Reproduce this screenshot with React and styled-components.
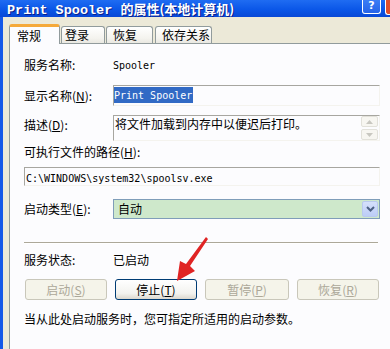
import styled, { createGlobalStyle } from "styled-components";

const Global = createGlobalStyle`
  html, body { margin: 0; padding: 0; background: #ece9d8; }
  body {
    width: 390px;
    height: 349px;
    overflow: hidden;
    font-family: "Noto Sans CJK SC", "Noto Sans", sans-serif;
    font-size: 12px;
    color: #000;
  }
`;

const Window = styled.div`
  position: relative;
  width: 390px;
  height: 349px;
  display: flex;
  flex-direction: column;
  overflow: hidden;
`;

const TitleBar = styled.div`
  height: 17px;
  flex-shrink: 0;
  display: flex;
  align-items: flex-start;
  background: linear-gradient(180deg, #1f6cf2 0%, #0b57e8 55%, #0848d6 100%);
  overflow: hidden;
`;

const Title = styled.div`
  padding: 1px 0 0 7px;
  color: #fff;
  font-weight: bold;
  font-size: 13px;
  line-height: 15px;
  white-space: nowrap;
  text-shadow: 1px 1px 0 #0a1f8c;
`;

const TitleLatin = styled.span`
  font-family: "Liberation Mono", monospace;
  font-size: 13.5px;
  font-weight: bold;
`;

const Controls = styled.div`
  margin-left: auto;
  display: flex;
  gap: 4px;
`;

const HelpButton = styled.div`
  width: 17px;
  height: 13px;
  border: 1px solid #fff;
  border-top: none;
  border-radius: 0 0 3px 3px;
  background: linear-gradient(180deg, #3b7df5 0%, #2563e8 100%);
  color: #fff;
  font-family: "DejaVu Sans", sans-serif;
  font-weight: bold;
  font-size: 11px;
  line-height: 11px;
  text-align: center;
`;

const CloseButton = styled.div`
  width: 4px;
  height: 14px;
  border-left: 1px solid #fff;
  border-bottom: 1px solid #fff;
  border-radius: 0 0 0 3px;
  background: #e0502e;
`;

const Frame = styled.div`
  flex: 1;
  display: flex;
  flex-direction: column;
  border-left: 3px solid #1458e8;
  box-shadow: inset 0 0 0 0 transparent;
  padding-left: 6px;
  background: #ece9d8;
`;

const TabRow = styled.div`
  height: 26px;
  flex-shrink: 0;
  display: flex;
  align-items: flex-end;
  gap: 1px;
  position: relative;
  z-index: 1;
`;

const Tab = styled.div`
  width: ${(p) => p.$w}px;
  height: ${(p) => (p.$active ? 20 : 17)}px;
  margin-left: ${(p) => p.$ml || 0}px;
  margin-bottom: ${(p) => (p.$active ? -1 : 0)}px;
  box-sizing: border-box;
  padding-left: ${(p) => p.$pl}px;
  display: flex;
  align-items: center;
  line-height: 14px;
  border: 1px solid #919b9c;
  border-bottom: none;
  border-radius: 3px 3px 0 0;
  background: ${(p) =>
    p.$active ? "#fcfcfe" : "linear-gradient(180deg, #ffffff 0%, #f4f3ee 70%, #e9e8e1 100%)"};
  border-top: ${(p) => (p.$active ? "3px solid #f5a93a" : "1px solid #919b9c")};
`;

const Panel = styled.div`
  flex: 1;
  display: flex;
  flex-direction: column;
  border-top: 1px solid #919b9c;
  border-left: 1px solid #919b9c;
  background: #fcfcfe;
  padding: 0 10px 0 14px;
`;

const Row = styled.div`
  display: flex;
  align-items: ${(p) => (p.$top ? "flex-start" : "center")};
  height: ${(p) => p.$h}px;
  margin-top: ${(p) => p.$mt}px;
  flex-shrink: 0;
`;

const Label = styled.div`
  width: 89px;
  flex-shrink: 0;
  line-height: 14px;
  white-space: nowrap;
  padding-top: ${(p) => p.$pt || 0}px;
`;

const Text = styled.div`
  line-height: 14px;
  white-space: nowrap;
  color: ${(p) => (p.$muted ? "#aca899" : "#000")};
`;

const Mono = styled.span`
  font-family: "DejaVu Sans Mono", monospace;
  font-size: 10px;
  letter-spacing: 0;
`;

const Field = styled.div`
  position: relative;
  flex: 1;
  height: 100%;
  box-sizing: border-box;
  border-top: 1px solid #a7a6a0;
  border-left: 1px solid #a7a6a0;
  border-right: 1px solid #f4f3ee;
  border-bottom: 1px solid #f4f3ee;
  padding: ${(p) => p.$pad || "1px 0 0 1px"};
  line-height: 14px;
  white-space: nowrap;
`;

const Selected = styled.span`
  display: inline-block;
  background: #316ac5;
  color: #fff;
  line-height: 14px;
  padding: 0 1px 0 0;
`;

const ScrollBtns = styled.div`
  position: absolute;
  right: 1px;
  top: 0;
  display: flex;
  flex-direction: column;
  gap: 2px;
`;

const ScrollBtn = styled.div`
  width: 15px;
  height: 9px;
  border: 1px solid #e2e1da;
  border-radius: 2px;
  background: #f7f6f1;
  display: flex;
  align-items: center;
  justify-content: center;
`;

const Select = styled.div`
  flex: 1;
  height: 100%;
  box-sizing: border-box;
  border: 1px solid #7f9db9;
  background: #cee8cb;
  display: flex;
  align-items: center;
  padding: 1px;
`;

const SelectText = styled.div`
  flex: 1;
  padding-left: 3px;
  line-height: 14px;
`;

const DropButton = styled.div`
  width: 16px;
  height: 100%;
  box-sizing: border-box;
  border: 1px solid #b9c9ef;
  border-radius: 2px;
  background: linear-gradient(180deg, #d5e0fb 0%, #bccdf6 100%);
  display: flex;
  align-items: center;
  justify-content: center;
`;

const Separator = styled.div`
  height: 1px;
  margin-top: ${(p) => p.$mt}px;
  margin-right: 2px;
  background: #aca899;
  border-bottom: 1px solid #ffffff;
  flex-shrink: 0;
`;

const ButtonRow = styled.div`
  display: flex;
  gap: 8px;
  height: 21px;
  margin-top: ${(p) => p.$mt}px;
  margin-left: 1px;
  flex-shrink: 0;
`;

const Button = styled.div`
  width: ${(p) => p.$w}px;
  height: 21px;
  box-sizing: border-box;
  border: 1px solid ${(p) => (p.$disabled ? "#c9c7ba" : "#003c74")};
  border-radius: 3px;
  background: ${(p) =>
    p.$disabled ? "#f5f4ea" : "linear-gradient(180deg, #ffffff 0%, #f3f3ef 70%, #dcd8ce 100%)"};
  color: ${(p) => (p.$disabled ? "#aca899" : "#000")};
  display: flex;
  align-items: center;
  justify-content: center;
  line-height: 14px;
`;

const Arrow = styled.svg`
  position: absolute;
  left: 0;
  top: 0;
  pointer-events: none;
`;

const Key = ({ k }) => (
  <>
    (<u>{k}</u>)
  </>
);

export default function App() {
  return (
    <>
      <Global />
      <Window>
        <TitleBar>
          <Title>
            <TitleLatin>Print Spooler </TitleLatin>的属性(本地计算机)
          </Title>
          <Controls>
            <HelpButton>?</HelpButton>
            <CloseButton />
          </Controls>
        </TitleBar>
        <Frame>
          <TabRow>
            <Tab $active $w={51} $pl={7}>常规</Tab>
            <Tab $w={44} $pl={3}>登录</Tab>
            <Tab $w={47} $pl={6}>恢复</Tab>
            <Tab $w={57} $pl={6} $ml={1}>依存关系</Tab>
          </TabRow>
          <Panel>
            <Row $h={18} $mt={12}>
              <Label>服务名称:</Label>
              <Text><Mono>Spooler</Mono></Text>
            </Row>
            <Row $h={21} $mt={11}>
              <Label>显示名称<Key k="N" />:</Label>
              <Field $pad="1px 0 0 0">
                <Selected><Mono>Print Spooler</Mono></Selected>
              </Field>
            </Row>
            <Row $h={26} $mt={9} $top>
              <Label $pt={3}>描述<Key k="D" />:</Label>
              <Field $pad="1px 0 0 1px">
                将文件加载到内存中以便迟后打印。
                <ScrollBtns>
                  <ScrollBtn>
                    <svg width="7" height="4" viewBox="0 0 7 4">
                      <path d="M0 4 L3.5 0 L7 4 Z" fill="#c8c7c0" />
                    </svg>
                  </ScrollBtn>
                  <ScrollBtn>
                    <svg width="7" height="4" viewBox="0 0 7 4">
                      <path d="M0 0 L3.5 4 L7 0 Z" fill="#c8c7c0" />
                    </svg>
                  </ScrollBtn>
                </ScrollBtns>
              </Field>
            </Row>
            <Row $h={12} $mt={5}>
              <Label>可执行文件的路径<Key k="H" />:</Label>
            </Row>
            <Row $h={19} $mt={9}>
              <Field $pad="2px 0 0 1px">
                <Mono>C:\WINDOWS\system32\spoolsv.exe</Mono>
              </Field>
            </Row>
            <Row $h={20} $mt={13}>
              <Label>启动类型<Key k="E" />:</Label>
              <Select>
                <SelectText>自动</SelectText>
                <DropButton>
                  <svg width="9" height="6" viewBox="0 0 9 6">
                    <path d="M1 1 L4.5 4.5 L8 1" stroke="#4d6185" strokeWidth="2" fill="none" />
                  </svg>
                </DropButton>
              </Select>
            </Row>
            <Separator $mt={23} />
            <Row $h={16} $mt={8}>
              <Label>服务状态:</Label>
              <Text>已启动</Text>
            </Row>
            <ButtonRow $mt={11}>
              <Button $w={82} $disabled>启动<Key k="S" /></Button>
              <Button $w={82}>停止<Key k="T" /></Button>
              <Button $w={84} $disabled>暂停<Key k="P" /></Button>
              <Button $w={82} $disabled>恢复<Key k="R" /></Button>
            </ButtonRow>
            <Row $h={14} $mt={12}>
              <Text>当从此处启动服务时，您可指定所适用的启动参数。</Text>
            </Row>
          </Panel>
        </Frame>
        <Arrow width="390" height="349" viewBox="0 0 390 349">
          <polygon
            points="206,237 208,239 190,266 195,271 177,281 180,261 186,264"
            fill="#e02424"
          />
        </Arrow>
      </Window>
    </>
  );
}
